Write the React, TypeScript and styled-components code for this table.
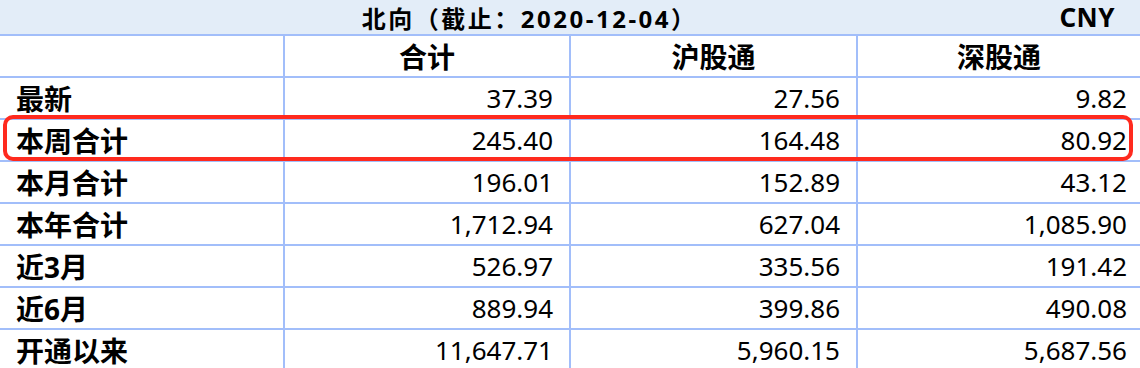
import styled, { createGlobalStyle } from 'styled-components';

const GlobalStyle = createGlobalStyle`
  html, body {
    margin: 0;
    padding: 0;
    background: #ffffff;
  }
  body {
    font-family: "Noto Sans", "Noto Sans CJK SC", sans-serif;
    color: #000000;
  }
`;

type TFlowRow = {
  label: string;
  total: string;
  sh: string;
  sz: string;
  highlight?: boolean;
};

const rows: TFlowRow[] = [
  { label: '最新', total: '37.39', sh: '27.56', sz: '9.82' },
  { label: '本周合计', total: '245.40', sh: '164.48', sz: '80.92', highlight: true },
  { label: '本月合计', total: '196.01', sh: '152.89', sz: '43.12' },
  { label: '本年合计', total: '1,712.94', sh: '627.04', sz: '1,085.90' },
  { label: '近3月', total: '526.97', sh: '335.56', sz: '191.42' },
  { label: '近6月', total: '889.94', sh: '399.86', sz: '490.08' },
  { label: '开通以来', total: '11,647.71', sh: '5,960.15', sz: '5,687.56' },
];

const App = () => {
  return (
    <>
      <GlobalStyle />
      <StTable>
        <StTitleBar>
          <StTitle>北向（截止：2020-12-04）</StTitle>
          <StUnit>CNY</StUnit>
        </StTitleBar>
        <StRow>
          <StHeadCell />
          <StHeadCell>合计</StHeadCell>
          <StHeadCell>沪股通</StHeadCell>
          <StHeadCell>深股通</StHeadCell>
        </StRow>
        {rows.map((row) => (
          <StRow key={row.label} $highlight={row.highlight}>
            <StLabelCell>{row.label}</StLabelCell>
            <StNumCell>{row.total}</StNumCell>
            <StNumCell>{row.sh}</StNumCell>
            <StNumCell $last>{row.sz}</StNumCell>
          </StRow>
        ))}
      </StTable>
    </>
  );
};

export default App;

const StTable = styled.div`
  width: 1140px;
  display: flex;
  flex-direction: column;
  gap: 2px;
  background-color: #a2befa;
`;

const StTitleBar = styled.div`
  height: 34px;
  display: flex;
  align-items: center;
  background-color: #e3edf8;
  font-weight: 700;
`;

const StTitle = styled.div`
  flex: 1;
  text-align: center;
  font-size: 24px;
  letter-spacing: 2.5px;
`;

const StUnit = styled.div`
  padding-right: 25px;
  font-size: 26px;
  letter-spacing: 0.5px;
`;

const StRow = styled.div<{ $highlight?: boolean }>`
  position: relative;
  display: grid;
  grid-template-columns: 283px 284px 285px 1fr;
  column-gap: 2px;
  height: 40px;

  ${({ $highlight }) =>
    $highlight &&
    `
    &::after {
      content: '';
      position: absolute;
      top: -5px;
      bottom: -1px;
      left: 3px;
      right: 7px;
      border: 4px solid #ff2a1e;
      border-radius: 10px;
      pointer-events: none;
    }
  `}
`;

const StCell = styled.div`
  background-color: #ffffff;
  display: flex;
  align-items: center;
  white-space: nowrap;
`;

const StHeadCell = styled(StCell)`
  justify-content: center;
  font-weight: 700;
  font-size: 28px;
`;

const StLabelCell = styled(StCell)`
  padding-left: 16px;
  font-weight: 700;
  font-size: 28px;
`;

const StNumCell = styled(StCell)<{ $last?: boolean }>`
  justify-content: flex-end;
  padding-right: ${({ $last }) => ($last ? '13px' : '16px')};
  font-size: 26px;
`;
